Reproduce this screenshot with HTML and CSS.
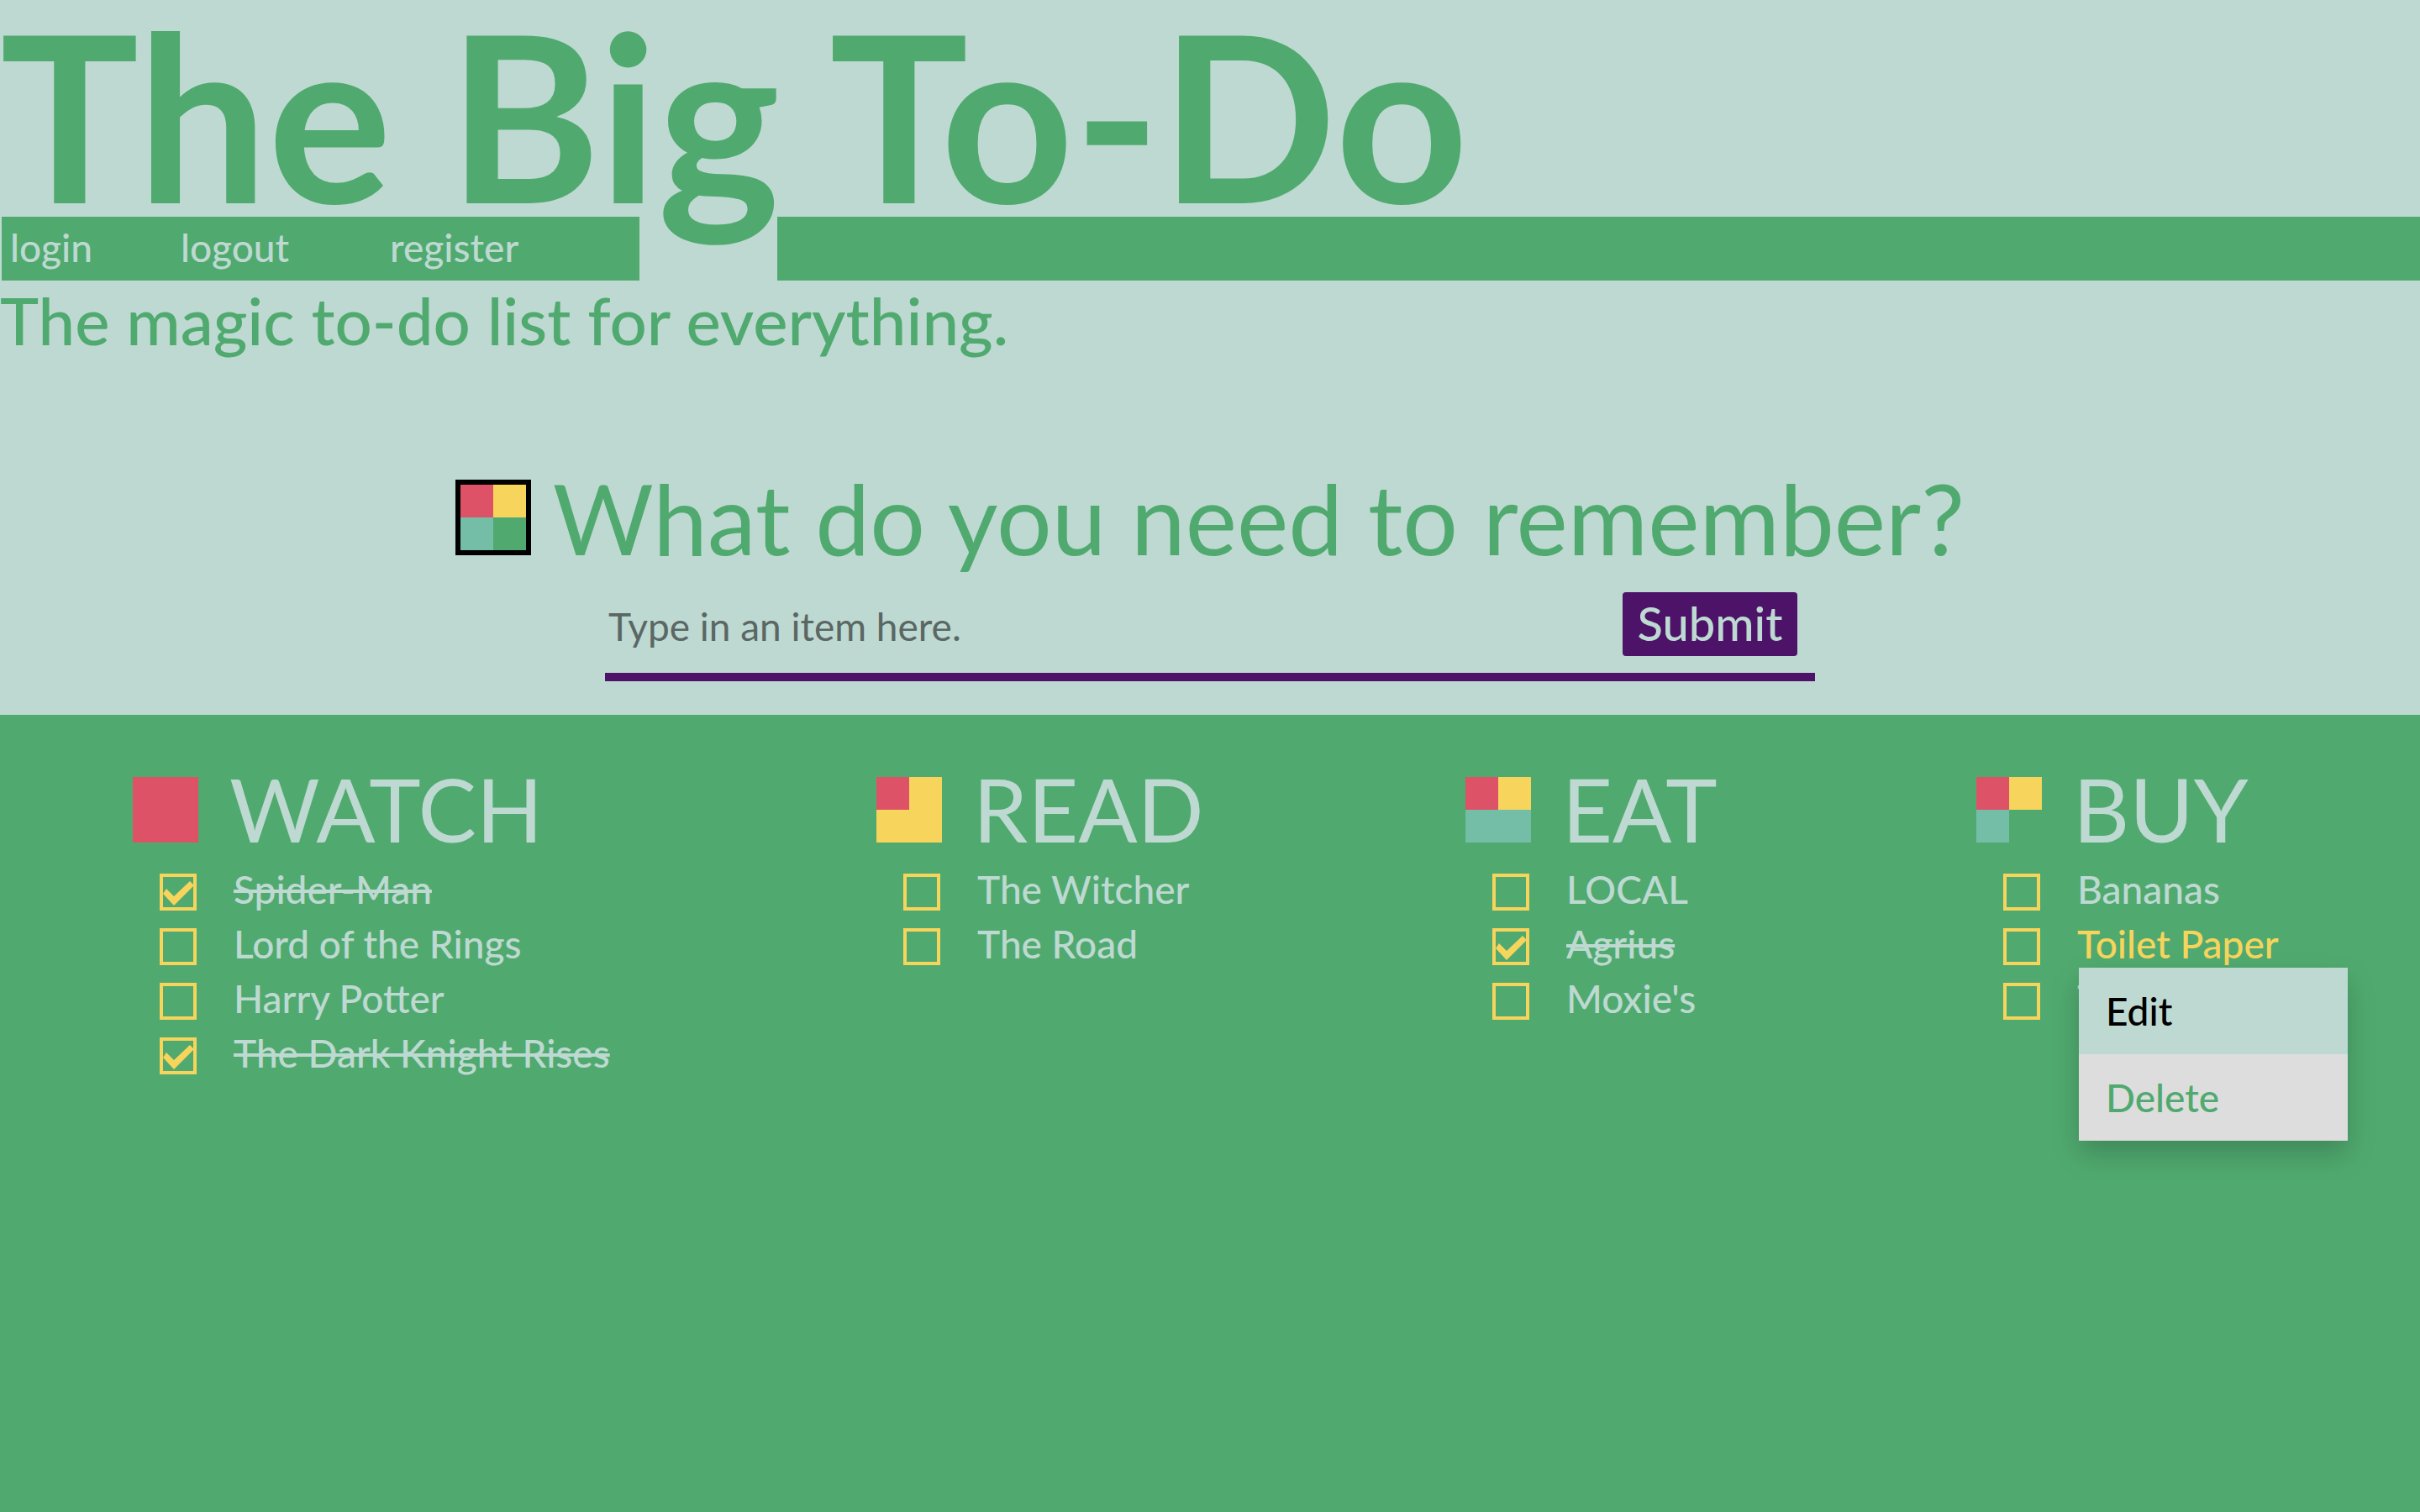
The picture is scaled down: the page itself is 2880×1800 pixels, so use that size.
FILE: index.html
```html
<!DOCTYPE html>
<html lang="en">
<head>
<meta charset="utf-8">
<title>The Big To-Do</title>
<link rel="stylesheet" href="styles.css">
</head>
<body>
<header class="hero">
  <h1 class="title">The Big To-Do</h1>
  <nav class="nav">
    <div class="nav-links">
      <a href="#login">login</a>
      <a href="#logout">logout</a>
      <a href="#register">register</a>
    </div>
    <div class="nav-fill"></div>
  </nav>
  <p class="tagline">The magic to-do list for everything.</p>
  <div class="prompt">
    <svg class="logo" viewBox="0 0 90 90" aria-hidden="true">
      <rect width="90" height="90" fill="#000"/>
      <rect x="6" y="6" width="39" height="39" fill="#de5268"/>
      <rect x="45" y="6" width="39" height="39" fill="#f7d45c"/>
      <rect x="6" y="45" width="39" height="39" fill="#74bea8"/>
      <rect x="45" y="45" width="39" height="39" fill="#50aa6f"/>
    </svg>
    <h2 class="question"><label for="item">What do you need to remember?</label></h2>
  </div>
  <form class="entry">
    <input class="entry-text" id="item" type="text" placeholder="Type in an item here.">
    <button class="entry-submit" type="submit">Submit</button>
  </form>
</header>
<main class="lists">
  <section class="list">
    <div class="list-head">
      <svg class="mark" viewBox="0 0 78 78" aria-hidden="true"><rect width="78" height="78" fill="#de5268"/></svg>
      <h3>WATCH</h3>
    </div>
    <ul>
      <li class="done"><input type="checkbox" id="w1" checked><label for="w1">Spider-Man</label></li>
      <li><input type="checkbox" id="w2"><label for="w2">Lord of the Rings</label></li>
      <li><input type="checkbox" id="w3"><label for="w3">Harry Potter</label></li>
      <li class="done"><input type="checkbox" id="w4" checked><label for="w4">The Dark Knight Rises</label></li>
    </ul>
  </section>
  <section class="list">
    <div class="list-head">
      <svg class="mark" viewBox="0 0 78 78" aria-hidden="true"><rect width="78" height="78" fill="#f7d45c"/><rect width="39" height="39" fill="#de5268"/></svg>
      <h3>READ</h3>
    </div>
    <ul>
      <li><input type="checkbox" id="r1"><label for="r1">The Witcher</label></li>
      <li><input type="checkbox" id="r2"><label for="r2">The Road</label></li>
    </ul>
  </section>
  <section class="list">
    <div class="list-head">
      <svg class="mark" viewBox="0 0 78 78" aria-hidden="true"><rect width="78" height="78" fill="#74bea8"/><rect width="39" height="39" fill="#de5268"/><rect x="39" width="39" height="39" fill="#f7d45c"/></svg>
      <h3>EAT</h3>
    </div>
    <ul>
      <li><input type="checkbox" id="e1"><label for="e1">LOCAL</label></li>
      <li class="done"><input type="checkbox" id="e2" checked><label for="e2">Agrius</label></li>
      <li><input type="checkbox" id="e3"><label for="e3">Moxie's</label></li>
    </ul>
  </section>
  <section class="list">
    <div class="list-head">
      <svg class="mark" viewBox="0 0 78 78" aria-hidden="true"><rect width="39" height="39" fill="#de5268"/><rect x="39" width="39" height="39" fill="#f7d45c"/><rect y="39" width="39" height="39" fill="#74bea8"/></svg>
      <h3>BUY</h3>
    </div>
    <ul>
      <li><input type="checkbox" id="b1"><label for="b1">Bananas</label></li>
      <li class="open">
        <input type="checkbox" id="b2"><label for="b2">Toilet Paper</label>
        <div class="menu">
          <button class="menu-item" type="button">Edit</button>
          <button class="menu-item menu-delete" type="button">Delete</button>
        </div>
      </li>
      <li><input type="checkbox" id="b3"><label for="b3">Tea</label></li>
    </ul>
  </section>
</main>
</body>
</html>
```
FILE: styles.css
```css
:root {
  --mist: #bdd9d1;
  --green: #50aa6f;
  --purple: #4c1369;
  --yellow: #f7d45c;
}
* { box-sizing: border-box; }
body {
  margin: 0;
  min-height: 100vh;
  background: var(--green);
  color: var(--mist);
  font: 500 46px/1.2 Lato, sans-serif;
}
h1, h2, h3, p, ul { margin: 0; padding: 0; }
button, input { font: inherit; border: 0; margin: 0; }

.hero {
  background: var(--mist);
  color: var(--green);
  padding-bottom: 40px;
}
.title {
  font-size: 276px;
  line-height: 272px;
  font-weight: 700;
  margin-bottom: -14px;
  white-space: nowrap;
}
/* the bar is broken so that the title's descender can hang through it */
.nav {
  display: flex;
  gap: 164px;
  height: 76px;
  padding-left: 2px;
}
.nav-links {
  flex: 0 0 759px;
  display: grid;
  grid-template-columns: 203px 249px 1fr;
  padding-left: 10px;
  background: var(--green);
  line-height: 74px;
}
.nav-links a { color: var(--mist); text-decoration: none; }
.nav-fill { flex: 1; background: var(--green); }
.tagline {
  font-size: 78px;
  line-height: 94px;
  font-weight: 500;
}
.prompt {
  display: flex;
  justify-content: center;
  align-items: baseline;
  gap: 26px;
  margin-top: 119px;
}
.logo { flex: none; width: 90px; height: 90px; }
.question {
  font-size: 116px;
  line-height: 140px;
  font-weight: 400;
}
.entry {
  display: flex;
  width: 50%;
  margin: 18px auto 0;
  padding: 0 21px 20px 0;
  border-bottom: 10px solid var(--purple);
}
.entry-text {
  flex: 1;
  min-width: 0;
  height: 76px;
  padding: 4px 4px 0;
  background: none;
  color: #000;
  font-weight: 400;
}
.entry-text::placeholder { color: #5a6764; opacity: 1; }
.entry-submit {
  width: 208px;
  height: 76px;
  padding: 0 0 2px;
  border-radius: 4px;
  background: var(--purple);
  color: var(--mist);
  font-size: 56px;
  line-height: 74px;
}

.lists {
  display: grid;
  grid-template-columns: 885fr 701fr 608fr 528fr;
  padding: 50px 0 50px 158px;
}
.list-head {
  display: flex;
  align-items: baseline;
  gap: 37px;
  margin-bottom: 1px;
}
.mark { flex: none; width: 78px; height: 78px; }
.list h3 {
  font-size: 104px;
  line-height: 124px;
  font-weight: 400;
}
.list ul { list-style: none; padding-left: 32px; }
.list li {
  position: relative;
  display: flex;
  gap: 44px;
  line-height: 65px;
  white-space: nowrap;
}
.list li.done label {
  text-decoration: line-through;
  text-decoration-thickness: 4px;
}
.list li.open { color: var(--yellow); z-index: 1; }
.list input {
  appearance: none;
  flex: none;
  width: 44px;
  height: 44px;
  margin-top: 14px;
  border: 4px solid var(--yellow);
}
.list input:checked::before {
  content: "";
  display: block;
  width: 44px;
  height: 44px;
  margin: -4px;
  background: var(--yellow);
  clip-path: polygon(4px 24px, 8px 18px, 17px 27px, 36px 9px, 41px 14px, 17px 38px);
}
.menu {
  position: absolute;
  top: 61px;
  left: 90px;
  width: 320px;
  display: flex;
  flex-direction: column;
  box-shadow: 0 16px 32px rgba(0, 0, 0, 0.2);
}
.menu-item {
  padding: 24px 32px;
  line-height: 55px;
  text-align: left;
  background: var(--mist);
  color: #000;
}
.menu-delete { background: #ddd; color: var(--green); }
```
